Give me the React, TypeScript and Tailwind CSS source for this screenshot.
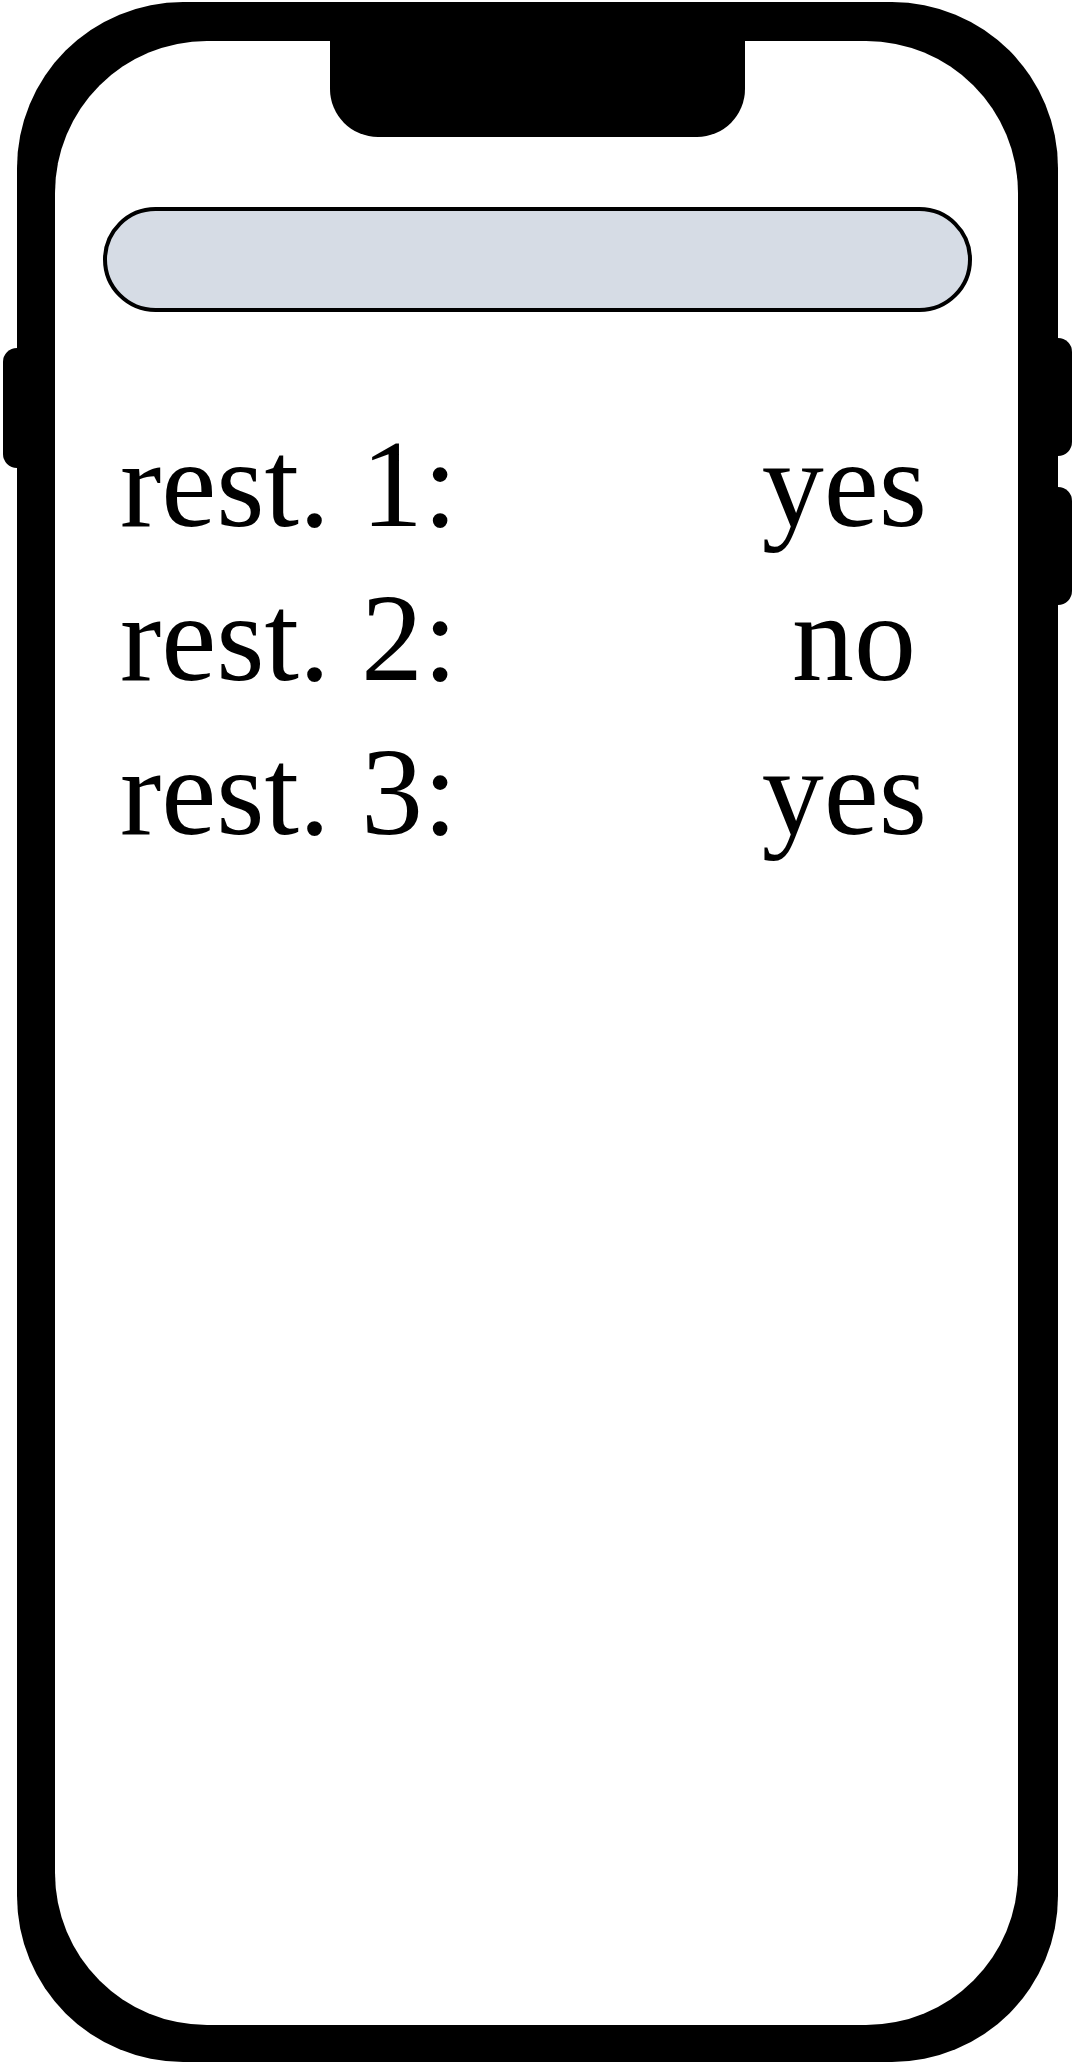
import React from 'react';

const rows = [
  { label: 'rest. 1:', value: 'yes', shift: '' },
  { label: 'rest. 2:', value: 'no', shift: 'mr-[11px]' },
  { label: 'rest. 3:', value: 'yes', shift: '' },
];

export default function App() {
  return (
    <div className="flex w-[1072px] h-[2062px] items-start bg-white overflow-hidden text-black">
      {/* left side button */}
      <div className="flex w-[17px] shrink-0 justify-end pt-[348px]">
        <div className="h-[120px] w-[14px] rounded-l-[14px] bg-black" />
      </div>

      {/* phone body */}
      <div className="mt-[2px] h-[2060px] w-[1041px] shrink-0 rounded-[166px] bg-black pt-[39px] pb-[37px] pl-[38px] pr-[40px]">
        <div className="flex h-full flex-col rounded-[152px] bg-white">
          <div className="ml-[275px] h-[96px] w-[415px] rounded-b-[48px] bg-black" />

          <div className="mt-[70px] ml-[48px] mr-[46px] h-[105px] rounded-full border-4 border-black bg-[#d6dce5]" />

          <div className="mt-[96px] flex flex-col pl-[65px] pr-[91px] font-['Liberation_Serif']">
            {rows.map((r) => (
              <div key={r.label} className="flex justify-between text-[124px] leading-[154px]">
                <span>{r.label}</span>
                <span className={r.shift}>{r.value}</span>
              </div>
            ))}
          </div>
        </div>
      </div>

      {/* right side buttons */}
      <div className="flex w-[14px] shrink-0 flex-col gap-[31px] pt-[338px]">
        <div className="h-[118px] w-[14px] rounded-r-[14px] bg-black" />
        <div className="h-[118px] w-[14px] rounded-r-[14px] bg-black" />
      </div>
    </div>
  );
}
